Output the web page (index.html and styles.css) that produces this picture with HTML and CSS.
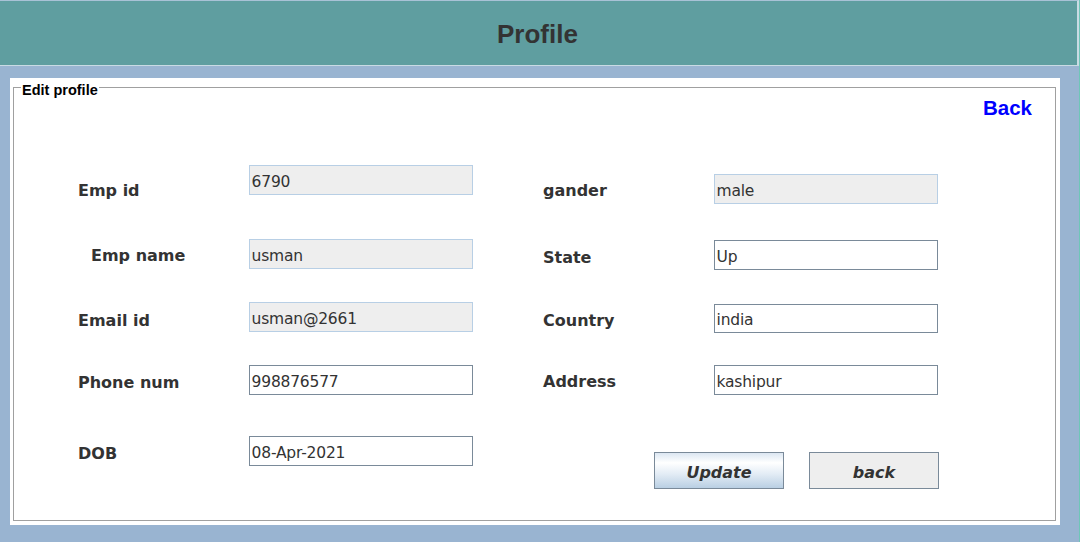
FILE: index.html
```html
<!DOCTYPE html>
<html>
<head>
<meta charset="utf-8">
<title>Profile</title>
<link rel="stylesheet" href="styles.css">
</head>
<body>
<header class="topbar"><h1 class="title">Profile</h1></header>
<main class="panel">
  <div class="group">
    <span class="group-title">Edit profile</span>
    <div class="back-row"><a class="back-link" href="#">Back</a></div>
    <div class="form">
      <div class="col">
        <div class="row r-empid"><label class="lbl">Emp id</label><input class="field locked" value="6790" readonly></div>
        <div class="row r-empname"><label class="lbl indent">Emp name</label><input class="field locked" value="usman" readonly></div>
        <div class="row r-email"><label class="lbl">Email id</label><input class="field locked" value="usman@2661" readonly></div>
        <div class="row r-phone"><label class="lbl">Phone num</label><input class="field" value="998876577"></div>
        <div class="row r-dob"><label class="lbl">DOB</label><input class="field" value="08-Apr-2021"></div>
      </div>
      <div class="col">
        <div class="row r-gender"><label class="lbl">gander</label><input class="field locked" value="male" readonly></div>
        <div class="row r-state"><label class="lbl">State</label><input class="field" value="Up"></div>
        <div class="row r-country"><label class="lbl">Country</label><input class="field" value="india"></div>
        <div class="row r-address"><label class="lbl">Address</label><input class="field" value="kashipur"></div>
        <div class="buttons">
          <button class="btn btn-primary">Update</button>
          <button class="btn">back</button>
        </div>
      </div>
    </div>
  </div>
</main>
</body>
</html>
```

FILE: styles.css
```css
* { box-sizing: border-box; }
html, body { margin: 0; padding: 0; }
body {
  background: #99B4D1;
  font-family: "DejaVu Sans", Verdana, sans-serif;
  color: #333;
  height: 542px;
  overflow: hidden;
  border-right: 1px solid #6fc6b8;
}
.topbar {
  height: 66px;
  background: #5F9EA0;
  border-top: 1px solid #a9c2d6;
  border-bottom: 1px solid #c9dbe4;
  border-right: 2px solid #c9dbe4;
  display: flex;
  align-items: center;
  justify-content: center;
}
.title {
  margin: 2px 0 0 -2px;
  font-family: "Liberation Sans", Arial, sans-serif;
  font-weight: bold;
  font-size: 26px;
  color: #333;
}
.panel {
  margin: 12px 19px 0 10px;
  height: 447px;
  background: #fff;
  padding: 9px 4px 4px 3px;
}
.group {
  position: relative;
  height: 434px;
  border: 1px solid #A0A0A0;
}
.group-title {
  position: absolute;
  left: 7px;
  top: -6px;
  background: #fff;
  padding: 0 1px;
  font-family: "Liberation Sans", Arial, sans-serif;
  font-weight: bold;
  font-size: 14.5px;
  line-height: 16px;
  color: #000;
}
.back-row {
  display: flex;
  justify-content: flex-end;
  margin-top: 8px;
  padding-right: 23px;
  height: 24px;
}
.back-link {
  font-family: "Liberation Sans", Arial, sans-serif;
  font-weight: bold;
  font-size: 20.5px;
  line-height: 24px;
  color: #0000FF;
  text-decoration: none;
}
.form {
  display: flex;
  gap: 70px;
  padding-left: 64px;
}
.col {
  width: 395px;
  display: flex;
  flex-direction: column;
}
.row {
  display: flex;
  align-items: flex-start;
  height: 30px;
}
.lbl {
  width: 171px;
  font-weight: bold;
  font-size: 16px;
  line-height: 20px;
  color: #333;
}
.lbl.indent { padding-left: 13px; }
.field {
  width: 225px;
  height: 30px;
  margin: 0;
  border: 1px solid #7A8A99;
  background: #fff;
  padding: 3px 0 0 2px;
  font-family: "DejaVu Sans", Verdana, sans-serif;
  font-size: 15.5px;
  letter-spacing: -0.2px;
  color: #333;
  outline: none;
}
.field.locked {
  background: #EEEEEE;
  border-color: #B8CFE5;
}
.r-empid { margin-top: 45px; }
.r-empid .lbl { margin-top: 16px; }
.r-empid .field { padding-top: 4px; }
.r-empname { margin-top: 44px; }
.r-empname .lbl { margin-top: 7px; }
.r-email { margin-top: 33px; }
.r-email .lbl { margin-top: 9px; }
.r-phone { margin-top: 33px; }
.r-phone .lbl { margin-top: 8px; }
.r-dob { margin-top: 41px; }
.r-dob .lbl { margin-top: 8px; }

.r-gender { margin-top: 54px; }
.r-gender .lbl { margin-top: 7px; }
.r-state { margin-top: 36px; }
.r-state .lbl { margin-top: 8px; }
.r-country { margin-top: 34px; height: 29px; }
.r-country .field { height: 29px; }
.r-country .lbl { margin-top: 7px; }
.r-address { margin-top: 32px; }
.r-address .lbl { margin-top: 7px; }

.buttons {
  display: flex;
  justify-content: flex-end;
  gap: 25px;
  margin-top: 57px;
  margin-right: -1px;
}
.btn {
  width: 130px;
  height: 37px;
  margin: 0;
  border: 1px solid #7A8A99;
  background: #EEEEEE;
  font-family: "DejaVu Sans", Verdana, sans-serif;
  font-weight: bold;
  font-style: italic;
  font-size: 16px;
  color: #333;
  padding: 4px 0 0;
}
.btn-primary {
  background: linear-gradient(#dce7f2 0%, #ffffff 28%, #e3ecf5 60%, #b9cfe3 100%);
}
```
